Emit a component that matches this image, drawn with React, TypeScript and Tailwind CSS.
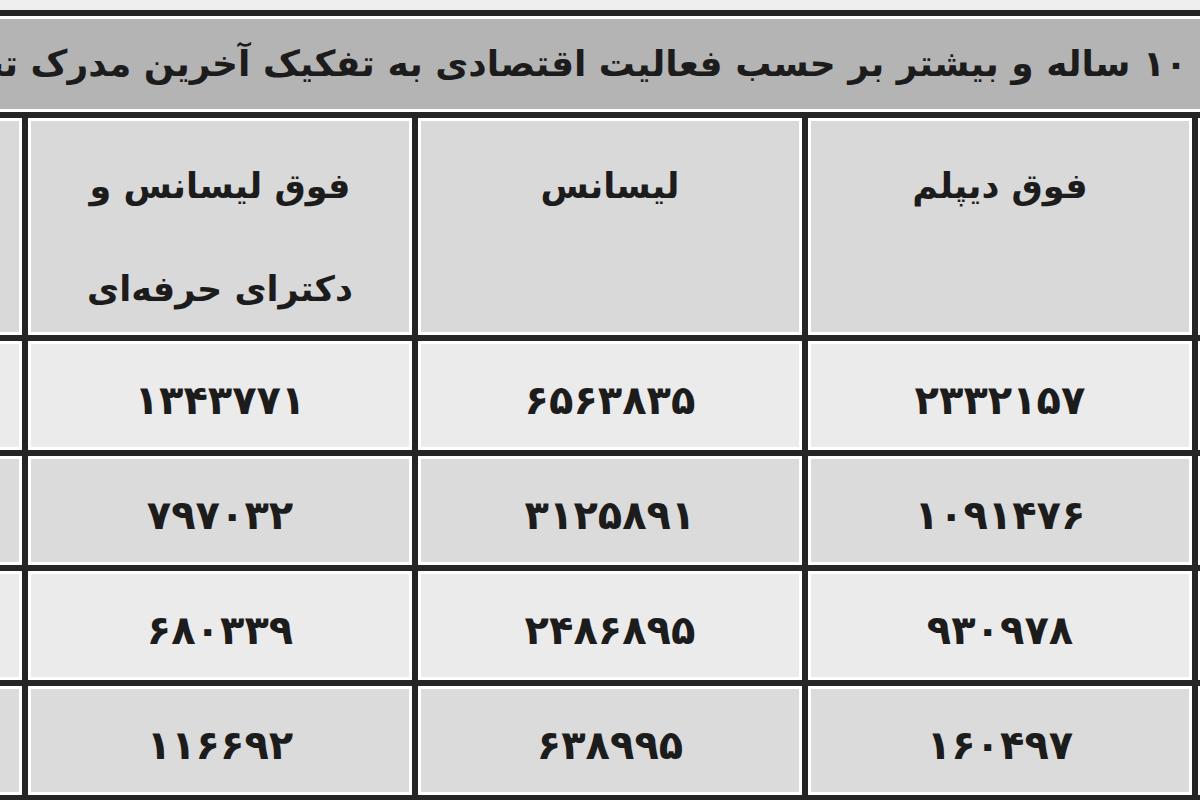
const header = [
  { key: "c", lines: ["فوق دیپلم"] },
  { key: "b", lines: ["لیسانس"] },
  { key: "a", lines: ["فوق لیسانس و", "دکترای حرفه‌ای"] },
];

const rows = [
  ["۲۳۳۲۱۵۷", "۶۵۶۳۸۳۵", "۱۳۴۳۷۷۱"],
  ["۱۰۹۱۴۷۶", "۳۱۲۵۸۹۱", "۷۹۷۰۳۲"],
  ["۹۳۰۹۷۸", "۲۴۸۶۸۹۵", "۶۸۰۳۳۹"],
  ["۱۶۰۴۹۷", "۶۳۸۹۹۵", "۱۱۶۶۹۲"],
  ["", "", ""],
];

function Cell({
  tall,
  light,
  children,
}: {
  tall?: boolean;
  light?: boolean;
  children?: React.ReactNode;
}) {
  return (
    <div
      className={`w-[390px] shrink-0 border-l-[6px] border-t-[6px] border-[#252525] ${
        tall ? "h-[223px]" : "h-[115px]"
      }`}
    >
      <div
        className={`h-full border-[3px] border-white ${
          tall ? "bg-[#d9d9d9]" : light ? "bg-[#ebebeb]" : "bg-[#dbdbdb]"
        }`}
      >
        {children}
      </div>
    </div>
  );
}

export default function App() {
  return (
    <div
      dir="rtl"
      className="w-[1200px] h-[800px] overflow-hidden bg-[#efefef] pt-[10px] font-['DejaVu_Sans',sans-serif] text-[#1c1c1c]"
    >
      {/* title row, wider than the visible crop */}
      <div className="border-t-[6px] border-[#252525]">
        <div className="h-[96px] border-y-[3px] border-white bg-[#b4b4b4] flex items-center justify-center">
          <div className="whitespace-nowrap text-[36px] font-bold shrink-0">
            جمعیت ۱۰ ساله و بیشتر بر حسب فعالیت اقتصادی به تفکیک آخرین مدرک تحصیلی
          </div>
        </div>
      </div>

      <div className="mr-[-382px] flex flex-col">
        <div className="flex">
          <Cell tall />
          {header.map((h) => (
            <Cell key={h.key} tall>
              <div className="pt-[14px] text-center text-[35px] font-bold leading-[103px]">
                {h.lines.map((l) => (
                  <div key={l}>{l}</div>
                ))}
              </div>
            </Cell>
          ))}
          <Cell tall />
        </div>

        {rows.map((r, i) => (
          <div key={i} className="flex">
            <Cell light={i % 2 === 0} />
            {r.map((v, j) => (
              <Cell key={j} light={i % 2 === 0}>
                <div className="h-full flex items-center justify-center pt-[8px] text-[40px] font-bold tracking-[3px]">
                  {v}
                </div>
              </Cell>
            ))}
            <Cell light={i % 2 === 0} />
          </div>
        ))}
      </div>
    </div>
  );
}
